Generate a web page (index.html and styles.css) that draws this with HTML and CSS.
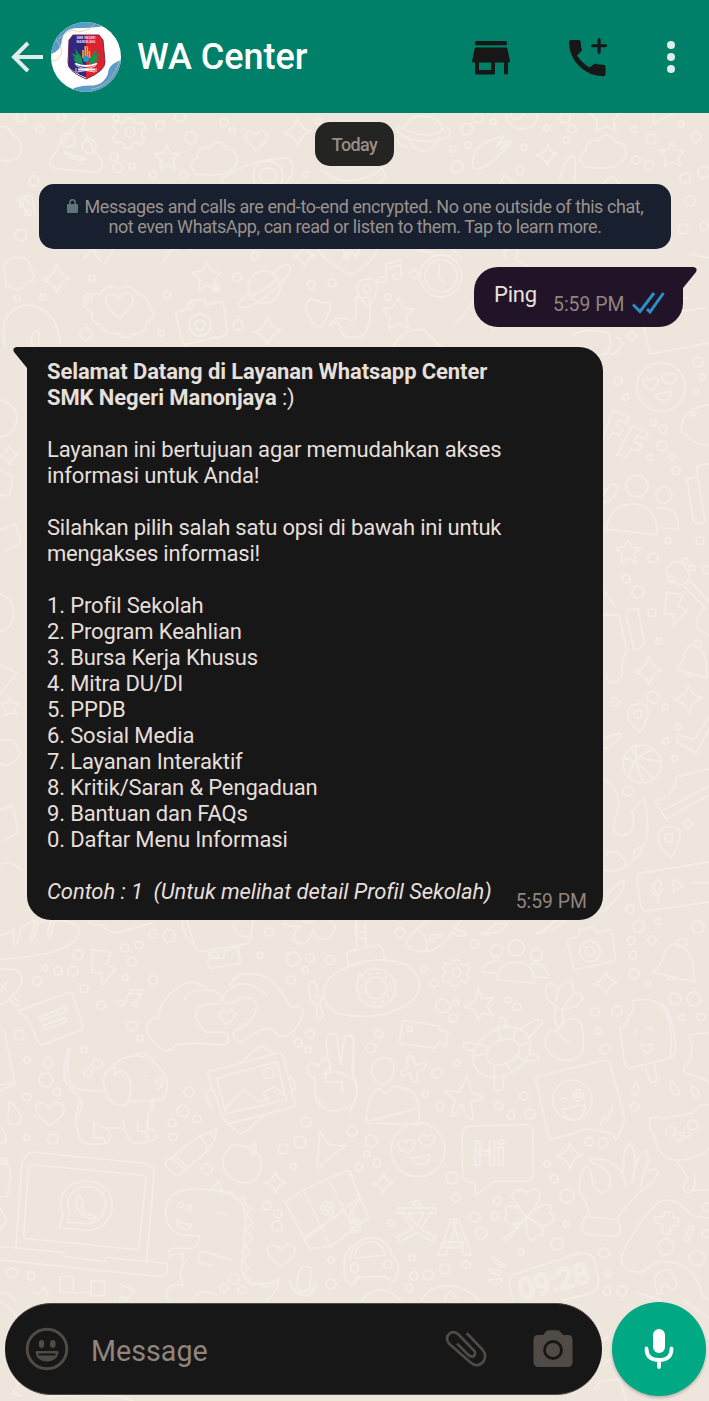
FILE: index.html
```html
<!DOCTYPE html>
<html lang="id">
<head>
<meta charset="utf-8">
<title>WA Center</title>
<link rel="stylesheet" href="styles.css">
</head>
<body>
<svg class="wallpaper" width="709" height="1401" viewBox="0 0 709 1401" aria-hidden="true">
  <defs>
    <path id="star" d="M0-15l5 10 11 1-8 8 3 11-11-5-9 6 1-12-8-8 11-2z"/>
    <path id="spark" d="M1-14Q3-3 14-1 4 2 1 14-2 3-14 1-3-2 1-14z"/>
    <path id="heart" d="M0 13Q-16 0-13-8-8-15 0-6 6-16 13-9 18 0 0 13z"/>
    <path id="bolt" d="M-9-17L7-14 2-3 11 1-3 17-2 5-12 5z"/>
    <path id="cloud" d="M-18 14Q-28 4-17-3-16-15-5-12 5-24 13-11 26-9 22 5 14 16-3 15z"/>
    <g id="people"><circle cy="-13" r="8"/><path d="M-19 19Q-19 2 0 1 19 2 18 22z"/><circle cx="-20" cy="-10" r="6"/><circle cx="20" cy="-6" r="6"/><path d="M-20 12L-34 11Q-32-2-15 0M20 16L32 17Q31 1 14 3"/></g>
    <g id="bell"><path d="M-20 18Q-10 8-8-5-3-16 5-14 20-6 20 10L22 29z"/><circle cx="9" cy="-16" r="5"/><path d="M-6 23q2 7 10 2"/></g>
    <g id="camera"><path d="M-23-13l11-3 1-8 15-2 3 6 12-3q4-1 5 4l3 25q0 4-4 5l-36 8q-4 1-5-4l-6-24q-1-4 1-4z"/><circle r="11"/><circle r="5"/></g>
    <g id="gear"><path d="M-3-14h6l1 4 4 2 5-2 3 6-4 3v4l3 4-5 5-5-2-3 2-1 4h-6l-1-4-4-2-5 1-2-6 4-3v-4l-4-3 4-6 5 2 3-2z"/><circle r="5"/></g>
    <g id="love"><circle r="27"/><path d="M-10 3q-13-4-9-11 5-3 7 1 7-6 9 0-1 7-7 10zM9-3Q-2-8 2-13q5-4 7 0 6-4 8 2-1 6-8 8zM-7 9l18-4q2 9-7 10-8 0-11-6z"/></g>
    <g id="planet"><circle r="16"/><path d="M-15 6q-17 14-6 15 14-2 36-23 17-17 9-20-5-2-15 9M-13 9Q4 2 14-9"/></g>
    <path id="pin" d="M0-12q11-1 10 9Q9 5 2 16-11 6-10-4-8-12 0-12zM0-6a4 4 0 1 0 .1 0z"/>
    <path id="note" d="M-7 8V-8L8-12V5M-7-3L8-7M-7 8a4 3 0 1 1-2-3M8 5a4 3 0 1 1-2-3"/>
  </defs>

  <!-- top strip -->
  <g>
    <path d="M58 150q-17 16 1 19l34 3q12-1 8-12-3-7-7-6-1-12-8-13 3-8-4-10l4-13q-11 2-14 13-7 4-6 10-10 1-8 9"/>
    <circle cx="68" cy="140" r="7"/><circle cx="89" cy="146" r="7"/><path d="M64 152l22 7q-10 4-22-7z"/>
    <use href="#gear" transform="translate(130 132)"/><use href="#star" transform="translate(167 157) scale(.75)"/>
    <use href="#cloud" transform="translate(214 160)"/><use href="#heart" transform="translate(256 140) scale(.8)"/><use href="#spark" transform="translate(297 132)"/>
    <path d="M0 126q12 1 11 8 10 3 10 13 1 13-14 14l-7-1M220 181q24-21 66-23 10 4 6 16-9 20-40 27z"/>
    <circle cx="268" cy="176" r="15"/><circle cx="268" cy="176" r="8"/>
    <path d="M474 156q2-14 31-20l-8 9 13-5-9 9 11-7-14 15q-14 12-22 12-6-2-2-13z"/>
    <circle cx="522" cy="113" r="16"/><circle cx="517" cy="112" r="7"/>
    <path d="M404 129q4-13 19-13 16 0 20 14-18 10-39-1zM404 129q-9-4-6 3 10 10 33 9 20-1 19-10-3-7-7-1M409 138q4 13 15 13 11-1 15-13M398 140q2 8 9 7"/>
    <path d="M322 170q16 14 34 10 14-1 26-12l4 8M385 176q-3 8-8 8M602 184l10-8 8 8M500 184l4-9 9 8"/>
    <use href="#spark" transform="translate(547 155) scale(.75)"/><use href="#star" transform="translate(605 116)"/><use href="#cloud" transform="translate(603 153)"/><use href="#star" transform="translate(672 154) scale(.8)"/>
    <path d="M654 114l-1 10 20-11M559 181q4-18 12-25l4 1q1 12 0 24"/>
    <path d="M20 207q-2-8 4-11l6 9M22 205q4-15 10-8l3 18M18 200l12 16"/>
    <use href="#star" transform="translate(207 276) scale(.9)"/><use href="#spark" transform="translate(56 279)"/><use href="#planet" transform="translate(264 287)"/>
    <path d="M6 276q-8-15 9-19 16 0 15 11 9 12-3 15-9 12-16 3-7 2-5-10z"/>
    <path d="M84 258l9-10 5 10 4 4M106 262l8-14M163 262l8-12 14-3 7 3M318 249q8 14 34 26 22-14 26-26M342 249l5 8 4-6 5 6 4-8"/>
    <use href="#spark" transform="translate(304 256) scale(.8)"/>
  </g>

  <!-- middle strip around the first bubbles -->
  <g>
    <path d="M85 303q5-12 15-9 8-12 19-5 12-7 18 5 12 1 12 13 9 8-2 15-1 12-13 12-9 8-17-1-12 3-16-8-12-3-8-12-10-4-8-10z"/>
    <use href="#heart" transform="translate(119 305)"/><use href="#camera" transform="translate(200 325)"/>
    <use href="#spark" transform="translate(267 331)"/><use href="#pin" transform="translate(367 291)"/><use href="#star" transform="translate(398 313)"/>
    <use href="#note" transform="translate(393 272)"/><circle cx="441" cy="276" r="21"/><circle cx="441" cy="276" r="16"/><path d="M439 264v13l5 6M421 251l12 2M452 249l10 9"/>
    <path d="M307 311q-4-9 4-12l13 4q11-1 4 11l-5 12q-10 4-16-15zM329 326q10-8 12 4t23 5q9-15 5-37l-13-1q1 23-3 24-17-8-24 5z"/>
    <path d="M5 347q-8-41 26-42 27 7 29 38M33 347q-4-10 2-15t3 13M393 347q10-20 31-17l17 17M454 326l20-25 20 29"/>
    <path d="M571 335q19-8 37-2 6 11-2 21l-25 4M616 338q8 0 5 8-4 9-12 8M638 317l67-9M642 320l8 34 59-11M658 301l30-3M506 258q-6-9 2-9M518 249l-2 10 10 7M690 254l19 4"/>
  </g>

  <!-- right strip beside the long message -->
  <g>
    <use href="#love" transform="translate(661 387) scale(.9)"/>
    <path d="M603 438l10-28 16 7-2 6-8-3-3 6 7 3-3 6-7-2-5 6M617 455l15-29 16 7-2 6-9-3-3 6 8 3-3 6-8-2-4 8z"/>
    <path d="M709 405q-28 3-28 26 5 7 5 2 5 12 22 12"/><circle cx="693" cy="414" r="2"/>
    <circle cx="637" cy="486" r="11"/><path d="M606 529q3-25 29-25 23 3 22 31z"/><circle cx="664" cy="495" r="8"/><path d="M661 528l17 1q2-23-21-21M600 500q13-24 17-12-1 12-13 14"/>
    <use href="#star" transform="translate(628 551) scale(.75)"/>
    <path d="M709 464l-10 1q-3 2-2 7l8 49q-9 7-12-2l-6-40 9-2"/>
    <path d="M668 577q-5-6 2-12 9-8 16 3l4 8q-6 13-14 7-7 0-8-6zM688 579l21 22M685 587l20 21q-12 10-7 20l11 8"/><circle cx="685" cy="561" r="3"/><circle cx="692" cy="568" r="3"/><circle cx="671" cy="579" r="3"/>
    <use href="#bolt" transform="translate(676 609)"/><path d="M603 615h16l8 36q-6 6-5 24-9 14-16 2M626 614q1-6 12-5l6 32q0 8-10 9zM603 590l12 16"/>
    <use href="#bell" transform="translate(691 656) scale(.75)"/><use href="#spark" transform="translate(648 671)"/><use href="#spark" transform="translate(688 699)"/><use href="#pin" transform="translate(638 716)"/>
    <circle cx="642" cy="764" r="19"/><path d="M623 758q17 2 30 21M632 747q0 13 29 14M655 749q-23 6-26 28M637 746q-4 16 7 36"/>
    <path d="M677 742l19 11 13-24M677 742v-7l18 4 14-22M655 801q20-4 21-24l33-8M655 801l11 18 43-24M662 811l47-25"/>
    <path d="M603 740q19-11 18-4-8 10-18 13M604 779q22 14 11 40-5 13 6 17 17-3 11-24l12-14q10 43-8 60-20 20-34 10M606 856q9-12 20 7M634 857q-2-10 10-10"/>
    <use href="#pin" transform="translate(669 840) scale(1.1)"/>
    <path d="M709 862l-68 11q-5 2-4 8l4 26q2 5 7 4l61-9M657 881q-6 3-3 9t6-1-2-9M651 891q6 10 12-2M658 897v6M673 880l1 12 10-7zM692 883h17M600 907q12-22 24-26 2 9-20 30"/>
  </g>

  <!-- left strip -->
  <g>
    <path d="M0 400q17 4 17 20-3 15-17 17M0 470l13 7-4 19-9-1M0 530l15-6 6 19-14 7M0 594q16 5 13 25-3 11-13 12M0 665l17 8-17 21M0 741q16-6 20 13-8 15-20 10M0 810l13-5 5 27-14 9M0 865q9-6 22 5"/>
    <use href="#spark" transform="translate(9 455) scale(.7)"/><use href="#star" transform="translate(10 706) scale(.6)"/>
  </g>

  <!-- lower left -->
  <g transform="translate(0 910) scale(.33333)">
    <path d="M0 76q30-8 42-17-6 40 4 46 8-5 16-52 35-22 46-22-20 54-14 64 10-4 21-58l40-10q-22 56-5 52 8-15 12-48 90 0 71 48Q205 135 0 148M265 35q20 14 40 10 22 26 50 22l106-30M278 118l55 10-14 36 29 12-42 49-2-36-28-1zM545 30q10 60 34 70M560 30l28 90q7 7 20 5l140-25 12-70M700 40q4 30 20 33-2 8 36 8M622 130l30-5 4 20h15l2-20 40-15 9 50-90 15q-18-15-1-30h20zM850 40q28 15 53 7-30 25-20 45 25 23 48-8l8-25q9 38 43 27 42-37 5-56M910 30q20 15 30 0"/>
    <path d="M0 178q55-5 63 15 10 36-23 60Q20 280 0 282M22 262l24 26q12 4 11-9l-20-25M0 220l20 22M20 215L2 245M53 303l155-56q7 0 10 8l32 93q0 7-7 12L130 404q-10 2-14-7L80 323zM120 320l75-28q10 6 0 14l-70 24q-10-2-5-10zM130 347l64-23q10 4 0 13l-60 22q-11-3-4-12z"/>
    <path d="M353 276q13-10 21 4-5 10-19 6M374 280l17-40 36-3-16 48q-8 8-16 0 4-10 16-8M387 252l35-2"/>
    <path d="M525 405q-14 28-44 10-44-38-40-66 11-30 34-25 0-34 30-67 65-70 120-17l-40 2q-22 5-31 27M625 240q50 7 37 40l-45 4q-43 12-22 53l22 30 60 0q18 23-2 38l-80-5-70 3M670 270q-7-22 43-48 46-5 88 33M690 225q24-48 90-29 50 10 92 97 38-15 37 19-20 57-58 67-24 4-31-23-41-5-83 35-23 15-37-15-1-15 29-26 41-28 41-67-14-27-43-19l-33 16q-22 2-24-14"/>
    <g transform="translate(681 321) scale(1.7)"><use href="#heart"/></g>
    <path d="M946 285q-20-20-20-47 5-38 20-20 10 24 3 40l18 8-9 15 13 35q-13 23-22 5l2-37-12-8 12-15M970 245q13-66 110-84M970 245q2 75 110 73M1080 190q-17 40 0 70M1045 168l-5-40 30-12M1068 80V30M1080 50h-15"/>
    <path d="M0 359q15 1 17 24l28 140-45 20M0 525l40-7M208 416q-14 95 12 112 18 18 102 15M208 416q-22 50-12 100l42 45q18 16-6 60M345 475q-30-3-35 40 10 80 68 70 32-60-5-100-14-7-28 10zM340 470q23-34 72-33 60 8 90 75 0 50-18 58l-100 5M397 440q35-25 67 10M459 566v35M437 497h4M465 520q14-35 24-6l-10 10-12-10M480 524q0 15 12-4M478 535l-10 1"/>
    <path d="M626 485l213-57q8 2 12 12l34 141q0 8-10 12L690 640q-14 0-20-15l-45-125q-4-10 1-15zM650 505l180-50 30 114-182 42zM722 458l51-45q10-8 18-2l29 20M870 497q20 25 16 40l-12 3M637 540q-25 5-19 20 16 36 20 30M676 595l55-56 50 36 25-10-20-15 37-20 34 27"/><circle cx="806" cy="490" r="16"/>
    <path d="M994 485q-20-80-13-105 16-18 30-2l11 86 11-80q16-17 28 0l-4 106q14 40 15 60-12 35-25 62M946 504q-30-7-22-35 10-20 32 0 6-20 20-25 15 0 16 20-10 30-24 28M946 504q-7 52 12 88M977 516q-10-37 46-29l32 20M975 517l50-1 2 35"/>
  </g>
  <!-- lower right -->
  <g transform="translate(350 910) scale(.33333)">
    <path d="M20 40v68M45 40l2 68M20 65h26M20 85h26M0 124l80-18q18 0 18 12l7 37M0 165q97-30 170 0 66 50 20 105Q110 330 0 317"/><circle cx="78" cy="234" r="58"/><circle cx="78" cy="234" r="32"/><circle cx="78" cy="234" r="45" stroke-dasharray="2 6"/>
    <path d="M237 30q-60 42-67 70 10 30 70 23 40-15 65-56l20 12q27 0 22-10l-34-13 20-25M205 60q30 20 25 62M235 90q13-25 40-12-10 10-20 4-5 13-18 11M396 69q22-4 40-29h37q-15 30-77 33zM560 68q30-8 58-38h30q-21 25-88 42z"/>
    <g transform="translate(320 187) scale(2.6)"><use href="#gear"/></g><g transform="translate(499 153) scale(3)"><use href="#people"/></g><g transform="translate(720 124) scale(2.8)"><use href="#camera"/></g><g transform="translate(968 140) scale(3 2.6)"><use href="#bell"/></g>
    <path d="M385 236l11 32 36-8-22 29 22 30-35-10-13 19-10-30-30-7 32-20zM162 331l98 15q10 0 12 15l22 5-5 42-24-10-8 16-100-12q-9-3-8-12l8-51z"/><circle cx="180" cy="357" r="8"/>
    <path d="M188 441l7 25 28-9q10 10 0 18l-22 11 2 30q-11 5-17-5l-5-22-24 9q-10-10 0-17l18-10-4-28q4-9 17-2zM0 380q15 5 10 25v95q12 15 12 45l-10 40M98 444q33-2 34 34-7 43-34 46-32-10-34-47 5-26 34-33zM90 536q20 28 36-8 80 5 80 65l3 50L60 640q-20-2-8-40 10-56 38-64z"/>
    <ellipse cx="455" cy="426" rx="92" ry="68" transform="rotate(-30 455 426)"/><ellipse cx="459" cy="426" rx="52" ry="36" transform="rotate(-25 459 426)"/>
    <path d="M443 362l6-37q15-10 20 15l2 14M510 360l45-31q24-3 22 10l-43 48M374 423q-37-6-36-18 6-16 45 0M540 430q26 5 27 15-2 10-36 6M434 500l-2 34q14 18 26 0l4-34M443 362l9 28M498 358l-10 26M540 397l-35 8M530 455l-30-18M486 488l-20-30M432 500l2-36M368 439l38-8M382 398l30 14"/>
    <path d="M623 358q-20-64 4-65M627 293q-46-20-39-62 14-24 37 8 16-24 38-28 9 30 7 41 20-5 29 10-10 33-63 35 8 38 0 53M655 398q-33-30-32-37 20-50 66-28 14 25 9 94-22 35-74 20-37-24-39-45-1-37 33-40M625 240l-8 32M670 252l-27 35"/>
    <g transform="translate(766 219) scale(2.5)"><use href="#spark"/></g>
    <path d="M848 272q56-10 83 12 40 30 30 160l-120 30q-12 2-17-12l-14-110q20 2 18-12 10-9 5-22 23-5 15-46zM931 284q30-7 47 130-3 25-17 30M855 360l8 6-14 6M905 348l-12 8 16 5M870 408l40-5M875 407q2 24 18 22 14-3 11-25M887 474l12 36q8 14 22 0l-7-45M1077 370q-58-2-60 12 17 20 0 75-28 25-7 35 42 5 67 26M845 535l16-21q13 42-9 41-12-10-7-20zM960 512q32 22 29 40-29 12-29-40zM1022 527q32 14 24 35-24 0-24-35z"/>
    <path d="M560 500l200-48q15-3 20 7l40 150q8 20-5 42l-5 19q-15 35-20 1l-72-15-120 34-38-170q-5-15 0-20z"/><circle cx="667" cy="570" r="59"/><circle cx="685" cy="556" r="17"/><circle cx="685" cy="556" r="7"/><path d="M630 570q10-10 22-3M637 598l68-15q-2 40-30 48-32 0-38-33zM765 618l-14 27M788 590l-16 40"/>
    <path d="M350 502q10 0 12 43l38 15q2 14-38 12l8 48q0 18-18 0l-18-37-20 32q-20 10-10-5l12-40-30-23q0-10 40 0z"/>
  </g>
  <!-- bottom left -->
  <g transform="translate(0 1100) scale(.33333)">
    <path d="M28 5q40 30 36 60-26 20-41-5zM0 80q20 20 18 40-5 10-18 10M241 0q-26 60 0 120 23 22 82 8 10-15 7-25-5-24-31-23l-20-15q10 30-4 50 22-7 40 5M370 65q7 64 45 65 54-6 53-20-3-24-24-23 3-24-4-22M412 65l3 30q17-6 28 8l-1 15M328 83l44 3M456 0l-6 30q-8 25-10 60"/>
    <g transform="translate(149 40) scale(3.1 2.8)"><use href="#heart"/></g>
    <path d="M685 73l33 28q12 0 30-15l45-40M955 0q26 60 107 12"/>
    <path d="M495 185l105-78 51-20-8 33-20 32-82 70q-12 7-30-10-17-15-16-27zM515 175l40 35M524 167l40 37M600 107l15 20 7 25M627 95l10 15M755 148q34 17 28 55-6 44-55 46-15-4-22-8-38-21-38-54 5-45 40-51 26-1 47 12zM755 158q-5-16 11-30 9 27-11 40zM959 92l29 42 52 4-38 23-51 46z"/>
    <g transform="translate(825 247) scale(2.3)"><use href="#spark"/></g>
    <path d="M48 443l17-250q10-38 37-36l327 32q36 6 33 35l-22 257M90 193l340 33q8 2 8 10l-22 205q0 8-10 7L78 416q-8-2-7-10l15-205q0-7 4-8zM0 440l190 17 5 13 120 15 5-12 180 17q10 38-20 40L0 480"/>
    <path d="M177 384l12-38q-22-65 29-95 66-25 108 25 27 56-13 97-36 27-80 15zM203 366l6-32q-17-42 22-67 48-22 79 19 17 40-14 72-27 22-63 10zM240 286l10 20-5 12q10 28 27 26l18 9q-8 8-30-1-44-25-28-60z"/>
    <path d="M552 488q-12-20 0-28-45 0-43 14-8-20 9-30l57 2q23-10 23-39-100 8-102-70 2-76 103-70 120 2 134 60 8 50-8 160-5 50 30 62 52 8 83-15-5 40-40 70M631 272l25-27 15 36 26-6 8 23 28-6 3 22 20 10-18 22 23 20-24 25 20 22-22 23 16 24-24 20 18 23-17 22 18 12 8 20 30-8 10 14 34-14M640 495q-43 0-43-15-10-25 18-25l80 25M530 357q14 14 43 16-5 26-37 7zM650 340q15-8 29 7M560 482q-33 30-8 75-34-10-49 10-10 26 5 33M580 600q12-40 68-15"/><circle cx="541" cy="315" r="8"/><circle cx="567" cy="323" r="8"/>
    <path d="M855 307l55-37 130-58q10 0 12 6l28 80M855 307l65 122q8 18 17 16l57-6 50-40 36-10M915 420l165-130M1032 335l48 47M917 410l105-70"/><path stroke-dasharray="6 4" d="M910 270l80 165M990 246l75 150"/><circle cx="982" cy="325" r="8"/><path d="M980 305q23-2 20 30l-10 14q-32-10-27-30 3-11 17-14z"/>
    <g transform="translate(843 464) scale(3 2.6)"><use href="#heart"/></g>
    <path d="M903 503q25-8 32 4l-7 58q-20 18-33 0-12-15 8-62zM870 541q2 38 40 36 35-4 40-27M877 560q8 30 50 25l15-15M0 180q35 0 30 65l-8 45H0M0 325l20 35-20 30M1080 425q-60 20-45 110l20 20q18-2 15-20h10"/><circle cx="1063" cy="503" r="12"/><circle cx="12" cy="184" r="10"/>
    <path d="M180 530h40v48h-40zM273 543h40v43h-40zM220 578h53M97 577l20 5 15-20 12 25M360 552l44 20-27 28-9-15-10 15M0 575q30 5 45 25"/>
  </g>
  <!-- bottom right -->
  <g transform="translate(350 1100) scale(.33333)">
    <g transform="translate(204 149) scale(3)"><use href="#love"/></g>
    <path d="M360 78l170-4q18 3 18 20l2 130q-2 18-20 20H430l-54 44-2-40q-32 0-36-25l-2-120q5-25 24-25z"/>
    <text class="doodle-text" x="369" y="194" font-size="100">Hi</text>
    <g transform="translate(98 250) scale(2.1)"><use href="#spark"/></g><g transform="translate(658 167) scale(2.8)"><use href="#spark"/></g>
    <text class="doodle-text" x="136" y="412" font-size="126">文</text><text class="doodle-text" x="264" y="465" font-size="150">A</text>
    <path d="M530 350q-55-62-40-70 18-22 42-2 33-24 38 5-5 36-40 67 50-50 74-32l-5 22q27 14-5 35-24 6-64-25 56 30 50 55l-20 2q-15 30-30-10zM530 350q-30 35-60 16-14-6 2-22-15-26 10-27 20-5 48 33zM530 350q-50 56-68 63-3 12 10 8z"/>
    <path d="M718 348q-5-40-30-75 0-60 20-75 14 5 17 28 0 40 32 53 36-11 20-56-20-28-53-34-12-20 20-13 70 5 85 85M820 220q-2-80 20-88 18 13 15 75l-10 44M858 195q7-38 30-40 16 13 0 50l-18 55M895 215q17-15 30 0-8 22-30 40-60 48-92 100M707 350l96 9q17 25 0 50l-93-6q-28-20-3-53z"/>
    <path d="M918 110q-23-10-18-55 23-10 35 2l93-18q20-30 49-24M915 110q10 80 90 68 50-7 72-35M980 182l36 55q-26 20-10 37 22 10 29-24l-2-25M1023 270h50"/><circle cx="962" cy="94" r="15"/><circle cx="1028" cy="75" r="15"/><path d="M986 100l18-3-4 15zM976 119q20 10 22-8 12 9 24-10"/>
    <path d="M1077 354q-59-2-79-36-52-34-85 0-50 50-100 150 0 50 60 48l50-30q46-10 98 26 27 30 35 74l21 15M945 335l24 2 2 17q27-6 10 23l-20 5-5 22-20-5 2-25q-33-7-20-25l22 2zM1020 377l12 3-18 44-10-4z"/><circle cx="948" cy="441" r="24"/><circle cx="1041" cy="474" r="23"/>
    <path d="M925 583q-33-71 33-75l15 25q16 17 0 35-17 0-23-17-23 0-13 29zM860 577l72 23M485 525l200-65q35-5 48 18l14 64q-2 32-30 40l-80 18M480 530q-8 20 10 70M669 464q12-15 20-2M427 470l37 25q2 10-15 3-15-8-22-28zM415 508l39 4q4 15-14 12-20-4-25-16zM415 540l39-3q4 10-14 15-20 2-25-12z"/>
    <text class="doodle-text thin" x="512" y="600" font-size="88" transform="rotate(-14 512 600)">09:28</text>
    <path d="M0 480q8-60 60-68 56 2 65 55 35 22 10 75-20 2-25-13l-92 2q-2 15-18 25M15 475q2-48 52-50 36 8 38 40zM0 218l56 137-56 34M0 345l32-55M20 365L0 330M49 50q5 18 20 10l135-34q8-8-4-26M0 370l30-10M215 600q20-38 80-43 50 0 90 43M35 600q60-60 115 0M285 600q0-20 20-25l15 18"/><circle cx="114" cy="493" r="12"/><circle cx="13" cy="505" r="12"/>
  </g>
  <!-- under the compose row -->
  <path d="M20 1382l-8 12 10 2M48 1397q60-6 85 4M607 1337q-14 10-8 30l12-8M595 1389l5-7 20-3 6 22M0 1302q20 10 19 28M683 1300l26 18"/>

  <!-- small bubbles between the doodles -->
  <g id="dots"></g>
</svg>

<header class="appbar">
  <svg class="back" width="34" height="34" viewBox="0 0 34 34"><path d="M33 17H4M18 3L4 17l14 14"/></svg>
  <svg class="avatar" width="70" height="70" viewBox="0 0 70 70">
    <defs><clipPath id="round"><circle cx="35" cy="35" r="35"/></clipPath></defs>
    <g clip-path="url(#round)">
      <path fill="#fff" d="M0 0h70v70H0z"/>
      <path fill="#5b9bc9" d="M0 32Q10 29 11 18 13 6 27 6q16 0 25-2L40-2H0z"/>
      <path fill="#5b9bc9" d="M71 38Q57 42 57 52 53 62 43 63.500q-17-.5-23 4.500l5 4h46z"/>
      <path fill="none" stroke="#dbc680" stroke-width=".7" d="M5 17Q12 27 10 33 7 39 1 39M8 17Q20 4 27 10q14-2 17-9M40 67q20-2 29-29"/>
      <path fill="#32277f" d="M22 13h14v43Q19 49 17 43l1-25z"/><path fill="#dd222d" d="M35 13h13l4 5 2 22q0 9-19 17z"/>
      <path fill="none" stroke="#7d2754" stroke-width="1" d="M22 13h26l4 5 2 22q0 9-19 17-19-8-18-17l1-22z"/>
      <g fill="#169253"><path d="M22 27l4 7-2-8 6 9-1-6 3 13q-8 0-10-6l3 1-5-6 5 2z"/><path d="M48 27l-4 7 2-8-6 9 1-6-3 13q8 0 10-6l-3 1 5-6-5 2z"/></g>
      <path fill="none" stroke="#f7b62e" stroke-width="1.500" d="M32 36v-8M34.200 36V24M36.400 36V24.500M38.500 36v-7"/>
      <circle cx="35" cy="37" r="3" fill="#159bd5"/>
      <path fill="none" stroke="#fff" stroke-width="1.800" d="M24 41.500q11 5 22 0M27 47.500h17"/><path fill="none" stroke="#fff" stroke-width=".8" d="M25 43.500q10 6 20 0M26 50q9-3 18 0M25 46v4M45 46v4"/>
      <text class="crest-text" x="25.500" y="17.200" textLength="19">SMK NEGERI</text><text class="crest-text" x="25.500" y="20.700" textLength="19">MANONJAYA</text>
    </g>
  </svg>
  <h1 class="title">WA Center</h1>
  <svg class="shop" width="38" height="34" viewBox="0 0 38 34" fill="#171717"><rect x="3" width="32" height="4.300" rx="1.500"/><path d="M4 6.500h30q1 0 1.300 1L38 20q0 1.500-2 1.500V32q0 1.500-2 1.500t-2-1.500V21.500h-9V32q0 1.500-1.500 1.500H4.500Q3 33.500 3 32V21.500H1.500Q0 21.500 0 20L2.700 7.500q.3-1 1.300-1zM7 21.500V29h12v-7.500z"/></svg>
  <svg class="call" width="39" height="39" viewBox="0 0 39 39" fill="#171717"><path d="M2 2h8q1.500 0 1.700 2 .1 5 1.300 8.500l-5 5Q13 25 20.500 29.500l5-4q4.500 1.300 9 1.300 2 .2 2 2v7.500q0 2-2 2Q20 38 10 28 0 18 0 4q0-2 2-2z"/><path d="M28.500 1.500q1.600-3 3.200 0v4.800h5q3 1.500 0 3h-5v5.200q-1.600 3-3.200 0V9.300h-5q-3-1.500 0-3h5z"/></svg>
  <svg class="more" width="8" height="32" viewBox="0 0 8 32" fill="#deecea"><circle cx="4" cy="4" r="4"/><circle cx="4" cy="16" r="4"/><circle cx="4" cy="28" r="4"/></svg>
</header>

<main class="chat">
  <div class="date">Today</div>
  <p class="notice"><svg class="lock" width="11" height="14" viewBox="0 0 11 14"><path fill="#5f7679" d="M1 5h1V4q0-4 3.500-4T9 4v1h1q1 0 1 1v7q0 1-1 1H1q-1 0-1-1V6q0-1 1-1zm2.500 0h4V4q0-2.500-2-2.500t-2 2.500z"/></svg>Messages and calls are end-to-end encrypted. No one outside of this chat,<br>not even WhatsApp, can read or listen to them. Tap to learn more.</p>

  <div class="bubble sent">
    <svg class="tail tail-right" width="16" height="24" viewBox="0 0 16 24"><path fill="#211428" d="M0 0h12.500q4.500 1 2.500 5L2 21v3H0z"/></svg>
    <span class="ping">Ping</span>
    <time class="time">5:59 PM</time>
    <svg class="ticks" width="33" height="22" viewBox="0 0 33 22"><path fill="none" stroke="#2e8ec6" stroke-width="3" d="M1 12.500l7 7L22 1M15 17l3 3L31.500 1"/></svg>
  </div>

  <div class="bubble received">
    <svg class="tail tail-left" width="16" height="24" viewBox="0 0 16 24"><path fill="#171717" d="M16 0H3.500Q-1 1 1 5l13 16v3h2z"/></svg>
    <div class="text">
      <p class="strong">Selamat Datang di Layanan Whatsapp Center</p>
      <p><span class="strong">SMK Negeri Manonjaya</span> :)</p>
      <p class="gap">Layanan ini bertujuan agar memudahkan akses</p>
      <p>informasi untuk Anda!</p>
      <p class="gap tight">Silahkan pilih salah satu opsi di bawah ini untuk</p>
      <p class="tight">mengakses informasi!</p>
      <p class="gap">1. Profil Sekolah</p>
      <p>2. Program Keahlian</p>
      <p>3. Bursa Kerja Khusus</p>
      <p>4. Mitra DU/DI</p>
      <p>5. PPDB</p>
      <p>6. Sosial Media</p>
      <p>7. Layanan Interaktif</p>
      <p>8. Kritik/Saran &amp; Pengaduan</p>
      <p>9. Bantuan dan FAQs</p>
      <p>0. Daftar Menu Informasi</p>
      <p class="gap example">Contoh : 1  (Untuk melihat detail Profil Sekolah)</p>
    </div>
    <time class="time">5:59 PM</time>
  </div>
</main>

<footer class="compose">
  <div class="field">
    <svg class="smile" width="44" height="44" viewBox="0 0 44 44"><circle cx="22" cy="22" r="19.800" fill="none" stroke="#514b47" stroke-width="3"/><g fill="#514b47"><ellipse cx="16.500" cy="17" rx="2.800" ry="4"/><ellipse cx="27.800" cy="17" rx="2.800" ry="4"/><path d="M12 24h20q2 0 1.500 2-2 8.500-11.500 8.500T10.500 26q-.3-2 1.500-2z"/></g><path d="M13.500 27.500h17" stroke="#171717" stroke-width="2"/></svg>
    <span class="hint">Message</span>
    <svg class="clip" width="42" height="38" viewBox="0 0 42 38"><path fill="none" stroke="#514b47" stroke-width="2.600" stroke-linecap="square" d="M22.500 4l15 15.500q5 6.500.5 12.500-6 6.500-13 0L4 13.500Q0 8 4 4 9 0 14 5l15.500 16q1.500 3-.5 5-3 1.500-5.500-1L13 14.500"/></svg>
    <svg class="cam" width="40" height="38" viewBox="0 0 40 38"><path fill="#514b47" d="M5 5h5l3-3.500Q14 .3 16 .3h8q2 0 3 1.200L30 5h5q4.500 0 4.500 5v22q0 5-5 5h-29q-5 0-5-5V10q0-5 4.500-5z"/><circle cx="20" cy="20" r="8.500" fill="#514b47" stroke="#171717" stroke-width="2.800"/></svg>
  </div>
  <div class="mic"><svg width="30" height="42" viewBox="0 0 30 42"><rect x="9" y="1" width="12" height="24" rx="6" fill="#fff"/><path fill="none" stroke="#fff" stroke-width="3.800" stroke-linecap="round" d="M2.500 20.500q0 11.500 12.500 11.500t12.500-11.500M15 32v7"/></svg></div>
</footer>
<script src="wallpaper.js"></script>
</body>
</html>
```

FILE: styles.css
```css
* { box-sizing: border-box; }
body {
  margin: 0;
  width: 709px;
  height: 1401px;
  display: flex;
  flex-direction: column;
  position: relative;
  overflow: hidden;
  background: #eee6dd;
  font-family: Roboto, "Noto Sans", sans-serif;
  font-size: 22px;
}
h1, p { margin: 0; }
svg { flex: none; }

.wallpaper {
  position: absolute;
  inset: 0;
  z-index: -1;
  fill: none;
  stroke: #f4ece6;
  stroke-width: 1.9px;
  stroke-linecap: round;
  stroke-linejoin: round;
}
.wallpaper path, .wallpaper circle, .wallpaper ellipse, .wallpaper text { vector-effect: non-scaling-stroke; }
.doodle-text { font-family: Roboto, "Noto Sans CJK SC", sans-serif; font-weight: 700; }
.thin { font-weight: 400; }

.appbar {
  height: 113px;
  flex: none;
  display: flex;
  align-items: center;
  padding-left: 10px;
  background: #008069;
}
.back { fill: none; stroke: #deecea; stroke-width: 4; }
.avatar { margin-left: 7px; }
.crest-text { font-size: 3.2px; font-weight: 700; fill: #e9dff0; }
.title {
  width: 335px;
  margin-left: 16px;
  color: #fff;
  font-size: 36px;
  font-weight: 500;
  line-height: 42px;
  white-space: nowrap;
}
.shop { margin-top: 2px; }
.call { margin-left: 59px; margin-top: 2px; }
.more { margin-left: 59px; }

.chat { flex: 1; display: flex; flex-direction: column; }
.date {
  align-self: center;
  width: 79px;
  height: 44px;
  margin-top: 9px;
  border-radius: 15px;
  background: #242422;
  color: #988e87;
  font-size: 18px;
  font-weight: 500;
  line-height: 45px;
  letter-spacing: -.6px;
  text-align: center;
}
.notice {
  width: 632px;
  height: 65px;
  margin: 18px 0 0 39px;
  padding-top: 13px;
  border-radius: 15px;
  background: #181f2f;
  color: #9a928d;
  font-size: 18px;
  line-height: 20px;
  letter-spacing: -.43px;
  text-align: center;
  white-space: nowrap;
}
.lock { margin-right: 7px; }

.bubble { position: relative; border-radius: 24px; }
.tail { position: absolute; top: 0; }
.tail-right { right: -14px; }
.tail-left { left: -14px; }
.time { color: #91847f; font-size: 19.400px; line-height: 22px; white-space: nowrap; }
.sent {
  align-self: flex-end;
  width: 209px;
  height: 60px;
  margin: 18px 26px 0 0;
  padding-left: 20px;
  border-top-right-radius: 0;
  background: #211428;
  color: #e9e2de;
  display: flex;
}
.ping { line-height: 26px; margin-top: 15px; width: 59px; letter-spacing: -.2px; }
.sent .time { margin-top: 27px; width: 79px; }
.ticks { margin-top: 25px; }
.received {
  width: 576px;
  height: 573px;
  margin: 20px 0 0 27px;
  padding: 12px 16px 7px 20px;
  border-top-left-radius: 0;
  background: #171717;
  color: #e6dfda;
  display: flex;
  justify-content: space-between;
  align-items: flex-end;
}
.text { align-self: flex-start; white-space: nowrap; line-height: 26px; letter-spacing: -.14px; }
.text .gap { margin-top: 26px; }
.text .tight { letter-spacing: -.21px; }
.text .strong { font-weight: 700; letter-spacing: -.1px; }
.text .example { font-style: italic; letter-spacing: -.07px; white-space: pre; }

.compose {
  height: 99px;
  flex: none;
  display: flex;
  gap: 10px;
  padding-left: 5px;
}
.field {
  width: 597px;
  height: 92px;
  margin-top: 1px;
  border-radius: 46px;
  border-top: 1px solid #514b47;
  border-bottom: 1px solid #514b47;
  background: #171717;
  display: flex;
  align-items: center;
  padding-left: 20px;
}
.hint { width: 354px; margin-left: 22px; color: #90847d; font-size: 28.700px; line-height: 34px; padding-top: 3px; }
.cam { margin-left: 46px; }
.mic {
  width: 94px;
  height: 94px;
  border-radius: 50%;
  background: #00a884;
  box-shadow: 0 2px 3px rgba(0, 0, 0, .22);
  display: flex;
  align-items: center;
  justify-content: center;
}
```

FILE: wallpaper.js
```js
// Small bubbles between the doodles: x, y, radius
const dots = [
  [40,129,4],[21,117,5],[61,117,4],[116,118,3],[160,125,4.500],[180,117,5],[224,122,4],[232,131,3],[191,138,6],[114,157,4],[118,168,5],[132,166,3],[153,175,4],[184,175,4],[306,174,3],[318,121,3],
  [467,129,6],[478,118,5],[493,122,3],[547,128,3],[565,118,5],[572,129,4],[566,140,3],[524,147,3],[468,145,3],[453,149,3],[457,167,6],[520,171,4],[634,130,3],[651,139,5],[681,124,3],[696,137,5],[636,160,4],[649,165,4.500],[704,172,6],
  [28,213,3],[21,235,6],[34,181,5],[17,298,3],[43,297,3],[92,278,3],[88,298,4],[190,306,3],[167,295,4],[216,288,3],[237,277,4],[255,256,4],[311,285,4],[332,283,4],[347,256,3],[388,297,3],[420,248,3],[161,333,3],[86,334,6],[238,325,5],[414,274,4],[685,178,5],[690,201,5],[704,226,4],[683,229,5],
  [632,336,4],[698,362,5],[702,377,3],[618,381,4],[626,397,3],[653,423,3],[663,429,4],[696,392,3],[662,446,5],[650,458,3],[672,457,3],[676,471,4],[668,541,3],[700,541,4],[653,558,5],[626,579,4],[638,592,6],[652,613,4],[659,641,3],[653,697,6],[665,707,3],[615,702,4],[678,727,3],[666,741,3],[675,758,3],[628,791,5],[688,824,4],[630,909,4],[707,570,4],
  [153,934,4],[169,936,6],[139,945,4],[125,948,4],[132,962,4.500],[125,978,3],[153,980,4.500],[78,955,5],[45,968,3],[58,971,4],[73,971,5],[37,981,4.500],[84,989,4],[101,1005,4],[132,1026,5],[140,1038,3],[84,1050,3],[97,1064,5],[88,1073,4],[27,1060,3],[48,1063,5],[46,1080,7],[57,1092,4],[27,1097,4],[19,1035,5],[189,1092,5],[269,932,4],[260,955,3],[293,959,7],[310,958,4],[330,960,5],[305,970,3],[291,980,4],[310,1034,4],[298,1043,4],[308,1050,3],
  [400,933,5],[475,944,4],[424,969,3],[434,983,4],[443,1006,7],[456,1003,3],[453,1018,4],[379,1034,4],[371,1048,5],[437,1073,5],[457,1063,3],[425,1094,3],[508,1000,3],[517,1007,4],[595,1012,4],[617,1011,5],[598,1031,3],[605,1049,5],[639,926,6],[658,922,3],[631,941,4],[652,940,4],[633,955,4],[634,974,5],[648,984,3],[675,999,6],[694,999,7],[701,1017,4],[682,1018,3],[698,927,6],[524,1096,4],[499,1106,4],[635,1107,4],
  [183,1111,6],[197,1119,4],[172,1123,4],[173,1137,4],[53,1139,5],[27,1138,3],[207,1169,5],[306,1122,5],[300,1142,6],[283,1149,5],[293,1166,3],[352,1131,5],[267,1206,4],[278,1214,4],[277,1226,5],[12,1273,5],[31,1276,4],[331,1260,3],[331,1284,5],[234,1279,5],[224,1288,4],[242,1290,4],
  [371,1141,6],[367,1154,3],[359,1167,4],[377,1163,4],[452,1178,6],[456,1198,4],[391,1223,3],[475,1217,5],[481,1233,6],[497,1201,4],[495,1216,4],[547,1164,3],[554,1179,4],[567,1196,7],[566,1224,3],[557,1244,6],[521,1252,3],[440,1107,4],[511,1115,4],[530,1114,5],[589,1142,4],[603,1143,5],[412,1258,3],[445,1269,5],[466,1265,4],[414,1276,4],[428,1275,5],[409,1288,4],[604,1253,5],[608,1274,3],[607,1291,4],[622,1291,5],[706,1207,4],[706,1234,4]
];
const layer = document.getElementById("dots");
for (const [x, y, r] of dots) {
  const c = document.createElementNS("http://www.w3.org/2000/svg", "circle");
  c.setAttribute("cx", x);
  c.setAttribute("cy", y);
  c.setAttribute("r", r);
  layer.appendChild(c);
}
```
